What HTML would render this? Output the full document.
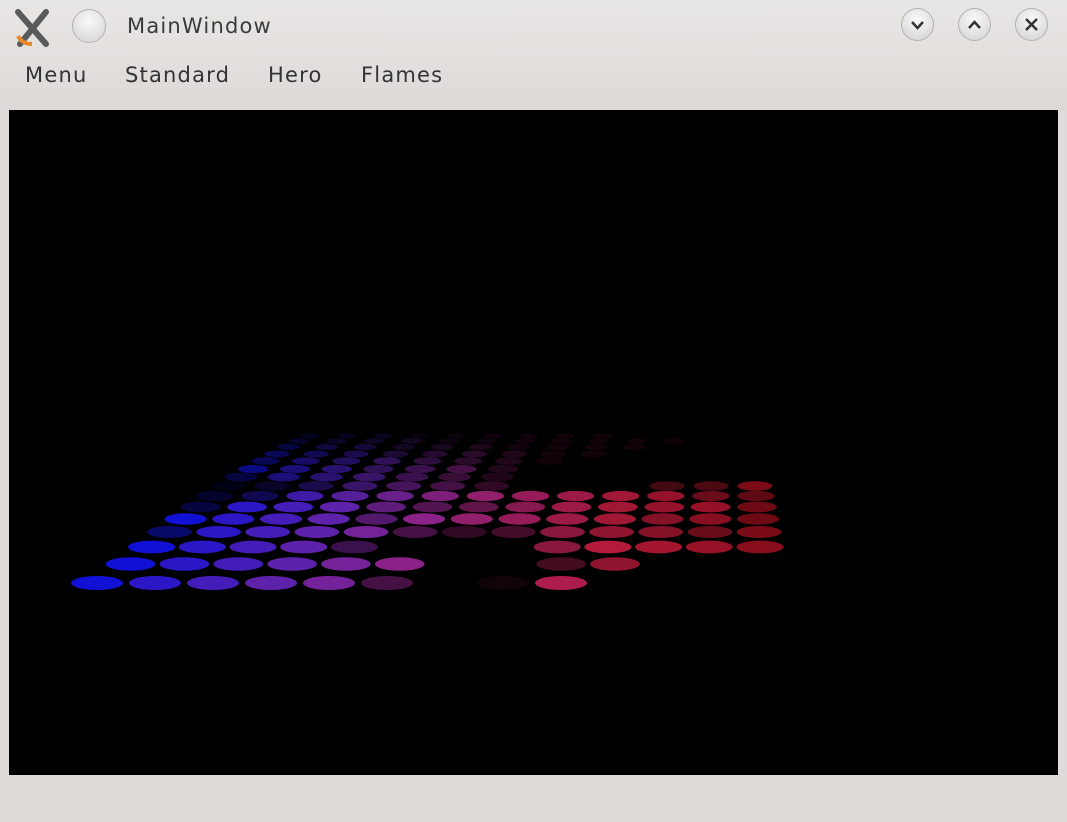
<!DOCTYPE html>
<html><head><style>
html,body{margin:0;padding:0;width:1067px;height:822px;overflow:hidden;background:#dedbd8;font-family:"DejaVu Sans","Liberation Sans",sans-serif;}
.title{position:absolute;left:127px;top:14px;font-size:21px;color:#3a3a3a;letter-spacing:1.2px}
.menu{position:absolute;top:63px;font-size:21px;color:#333;letter-spacing:1.2px}
.btn{position:absolute;width:30px;height:30px;border-radius:50%;background:radial-gradient(circle at 50% 35%,#fafafa,#d2d0ce);border:1px solid #b4b2b0;box-sizing:border-box;}
#gl{position:absolute;left:9px;top:110px;width:1049px;height:665px;background:#000;}
</style></head><body>
<div style="position:absolute;left:0;top:0;width:1067px;height:110px;background:linear-gradient(#e9e7e5,#dcd9d6)"></div>
<svg style="position:absolute;left:12px;top:6px" width="42" height="42" viewBox="0 0 42 42">
<path d="M6 6 L34 38 M34 6 L8 38" stroke="#5a5a5a" stroke-width="6" stroke-linecap="round"/>
<path d="M6 30 Q10 38 20 38" stroke="#e88a2a" stroke-width="4" fill="none"/>
</svg>
<div class="btn" style="left:72px;top:9px;width:34px;height:34px"></div>
<div class="title">MainWindow</div>
<div class="btn" style="left:901px;top:8px;width:33px;height:33px"></div>
<div class="btn" style="left:958px;top:8px;width:33px;height:33px"></div>
<div class="btn" style="left:1015px;top:8px;width:33px;height:33px"></div>
<svg style="position:absolute;left:901px;top:8px" width="150" height="34">
<path d="M11 14 L16.5 20 L22 14" stroke="#333" stroke-width="2.5" fill="none"/>
<path d="M68 20 L73.5 14 L79 20" stroke="#333" stroke-width="2.5" fill="none"/>
<path d="M125 11 L136 22 M136 11 L125 22" stroke="#333" stroke-width="2.5"/>
</svg>
<div class="menu" style="left:25px">Menu</div>
<div class="menu" style="left:125px">Standard</div>
<div class="menu" style="left:268px">Hero</div>
<div class="menu" style="left:361px">Flames</div>
<div id="gl"><svg id="s" width="1049" height="665"></svg></div>
<script>
var s=document.getElementById('s'),h='';
var ys=[583,564,547,532,519,507,496,486,477,469,461,454,447,441,436];
var B=[
[1,1,1,1,1,.5,0,.1,1,0,0,0,0],
[1,1,1,1,1,1,0,0,.4,.8,0,0,0],
[1,1,1,1,.5,0,0,0,.8,1,1,1,1],
[.5,1,1,1,1,.5,.3,.4,.8,.8,.8,.7,.9],
[1,1,1,1,.7,1,.9,.9,.9,.9,.8,.9,.8],
[.3,1,1,1,.8,.6,.6,.8,.9,.9,.9,1,.8],
[.2,.4,.9,.9,.9,.9,.9,.9,.9,.9,.9,.7,.7],
[.1,.2,.4,.6,.6,.5,.3,0,0,0,.4,.5,.9],
[.3,.6,.6,.6,.5,.4,.2,0,0,0,0,0,0],
[.6,.6,.6,.5,.5,.5,.2,0,0,0,0,0,0],
[.4,.5,.5,.5,.4,.3,.2,.1,0,0,0,0,0],
[.4,.4,.4,.3,.3,.3,.2,.1,.1,0,0,0,0],
[.3,.3,.3,.2,.2,.2,.1,.1,.1,.1,0,0,0],
[.2,.2,.2,.2,.1,.1,.1,.1,.1,.1,.1,0,0],
[.15,.15,.15,.1,.1,.1,.1,.1,.1,0,0,0,0]];
function lerp(a,b,t){return a+(b-a)*t}
var stops=[[20,20,250],[110,40,200],[190,40,140],[210,30,70],[160,15,30]];
function col(t){var p=t*(stops.length-1),i=Math.min(Math.floor(p),stops.length-2),f=p-i;return stops[i].map(function(v,k){return lerp(v,stops[i+1][k],f)});}
for(var r=0;r<ys.length;r++){
 var y=ys[r]-110,d=r/(ys.length-1);
 var x0=lerp(97,310,Math.pow(d,0.7)),x1=lerp(793,760,Math.min(1,r/2))-(r>2?(r-2)*1:0);
 var n=12,rx=lerp(26,9,d),ry=lerp(7,2.5,d);
 for(var c=0;c<=n;c++){
  var b=B[r][c];if(b<=0.02)continue;
  var t=c/n,x=lerp(x0,x1,t)-9;
  var cc=col(t);
  h+='<ellipse cx="'+x.toFixed(1)+'" cy="'+y+'" rx="'+rx.toFixed(1)+'" ry="'+ry.toFixed(1)+'" fill="rgb('+cc.map(function(v){return Math.round(v*b*0.85)}).join(',')+')"/>';
 }
}
s.innerHTML=h;
</script>
</body></html>
